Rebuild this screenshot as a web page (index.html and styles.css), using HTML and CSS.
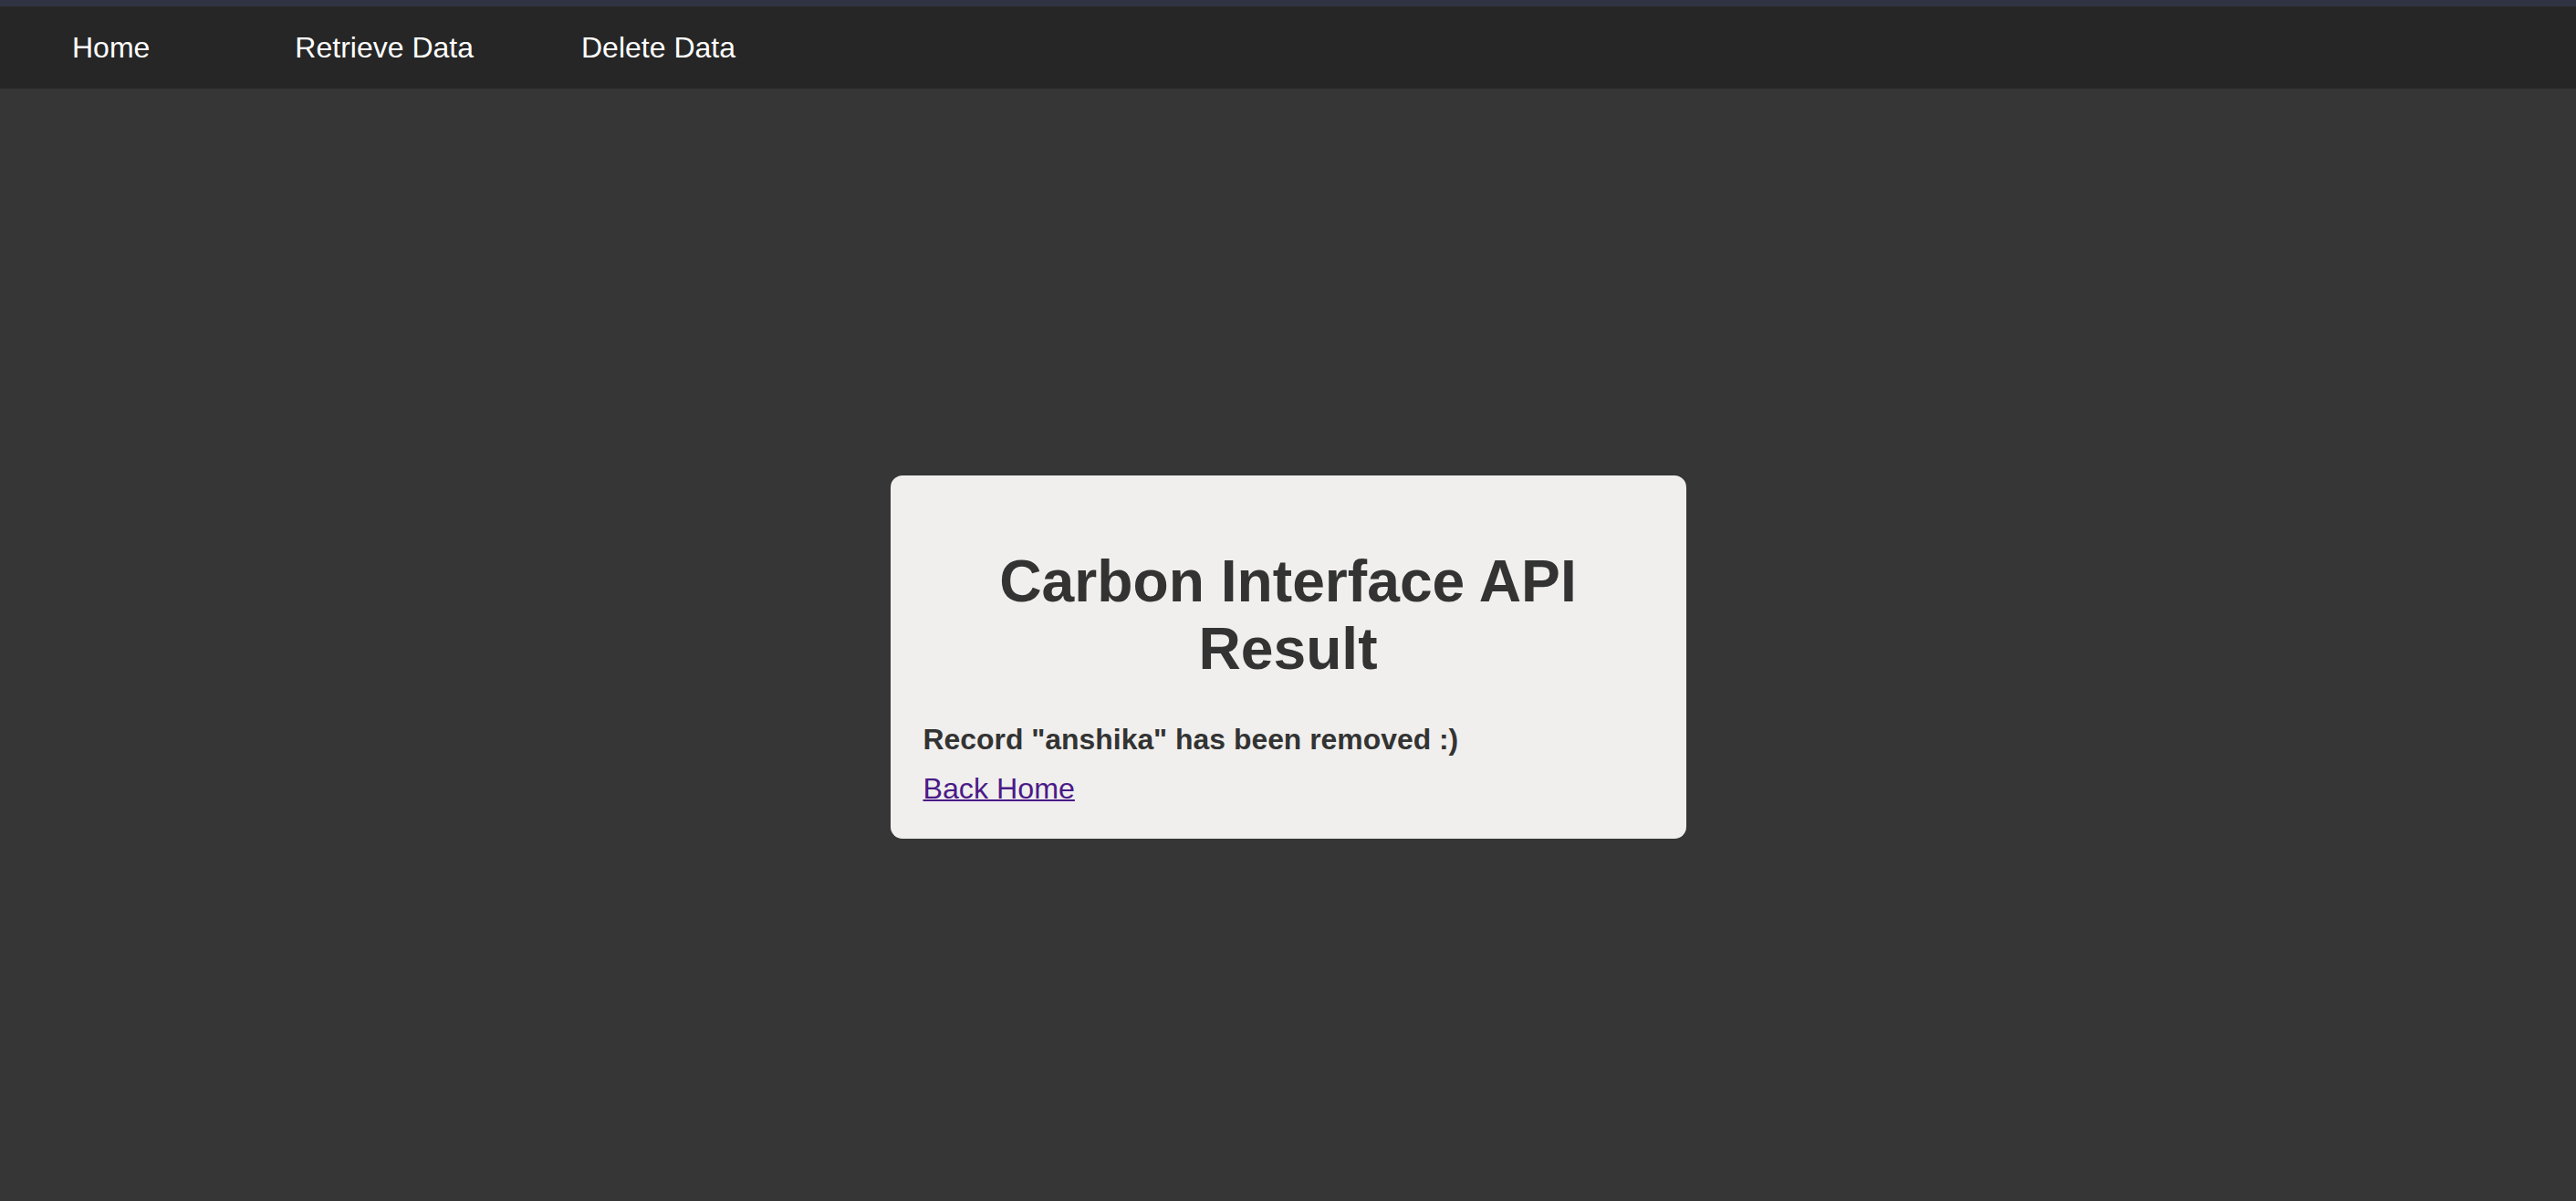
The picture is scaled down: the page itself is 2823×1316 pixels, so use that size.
FILE: index.html
```html
<!DOCTYPE html>
<html lang="en">
<head>
<meta charset="utf-8">
<title>Carbon Interface API Result</title>
<link rel="stylesheet" href="styles.css">
</head>
<body>
<div class="topstrip"></div>
<nav class="navbar">
  <a class="nav-link nav-home" href="#">Home</a>
  <a class="nav-link nav-retrieve" href="#">Retrieve Data</a>
  <a class="nav-link nav-delete" href="#">Delete Data</a>
</nav>
<main class="content">
  <section class="card">
    <h1 class="card-title">Carbon Interface API Result</h1>
    <p class="card-message">Record "anshika" has been removed :)</p>
    <a class="card-link" href="#">Back Home</a>
  </section>
</main>
</body>
</html>
```
FILE: styles.css
```css
html, body {
  margin: 0;
  padding: 0;
}
body {
  background: #363636;
  font-family: "Liberation Sans", Arial, sans-serif;
  min-height: 1316px;
}
.topstrip {
  height: 7px;
  background: #2f3344;
}
.navbar {
  height: 90px;
  background: #262626;
  display: flex;
  align-items: center;
  padding-left: 79px;
}
.nav-link {
  color: #ffffff;
  text-decoration: none;
  font-size: 32px;
  line-height: normal;
}
.nav-retrieve {
  margin-left: 159px;
}
.nav-delete {
  margin-left: 118px;
}
.content {
  display: flex;
  justify-content: center;
  padding-top: 424px;
}
.card {
  width: 800px;
  background: #f0efed;
  border-radius: 13px;
  padding: 36px;
  color: #333333;
}
.card-title {
  font-size: 64.2px;
  font-weight: bold;
  text-align: center;
  margin: 43px 0 44px 0;
  line-height: normal;
}
.card-message {
  font-size: 31.9px;
  font-weight: bold;
  margin: 0 0 17px 0;
  line-height: normal;
}
.card-link {
  display: inline-block;
  font-size: 32.2px;
  color: #4b1a88;
  text-decoration: underline;
  text-decoration-thickness: 2px;
  line-height: normal;
}
```
